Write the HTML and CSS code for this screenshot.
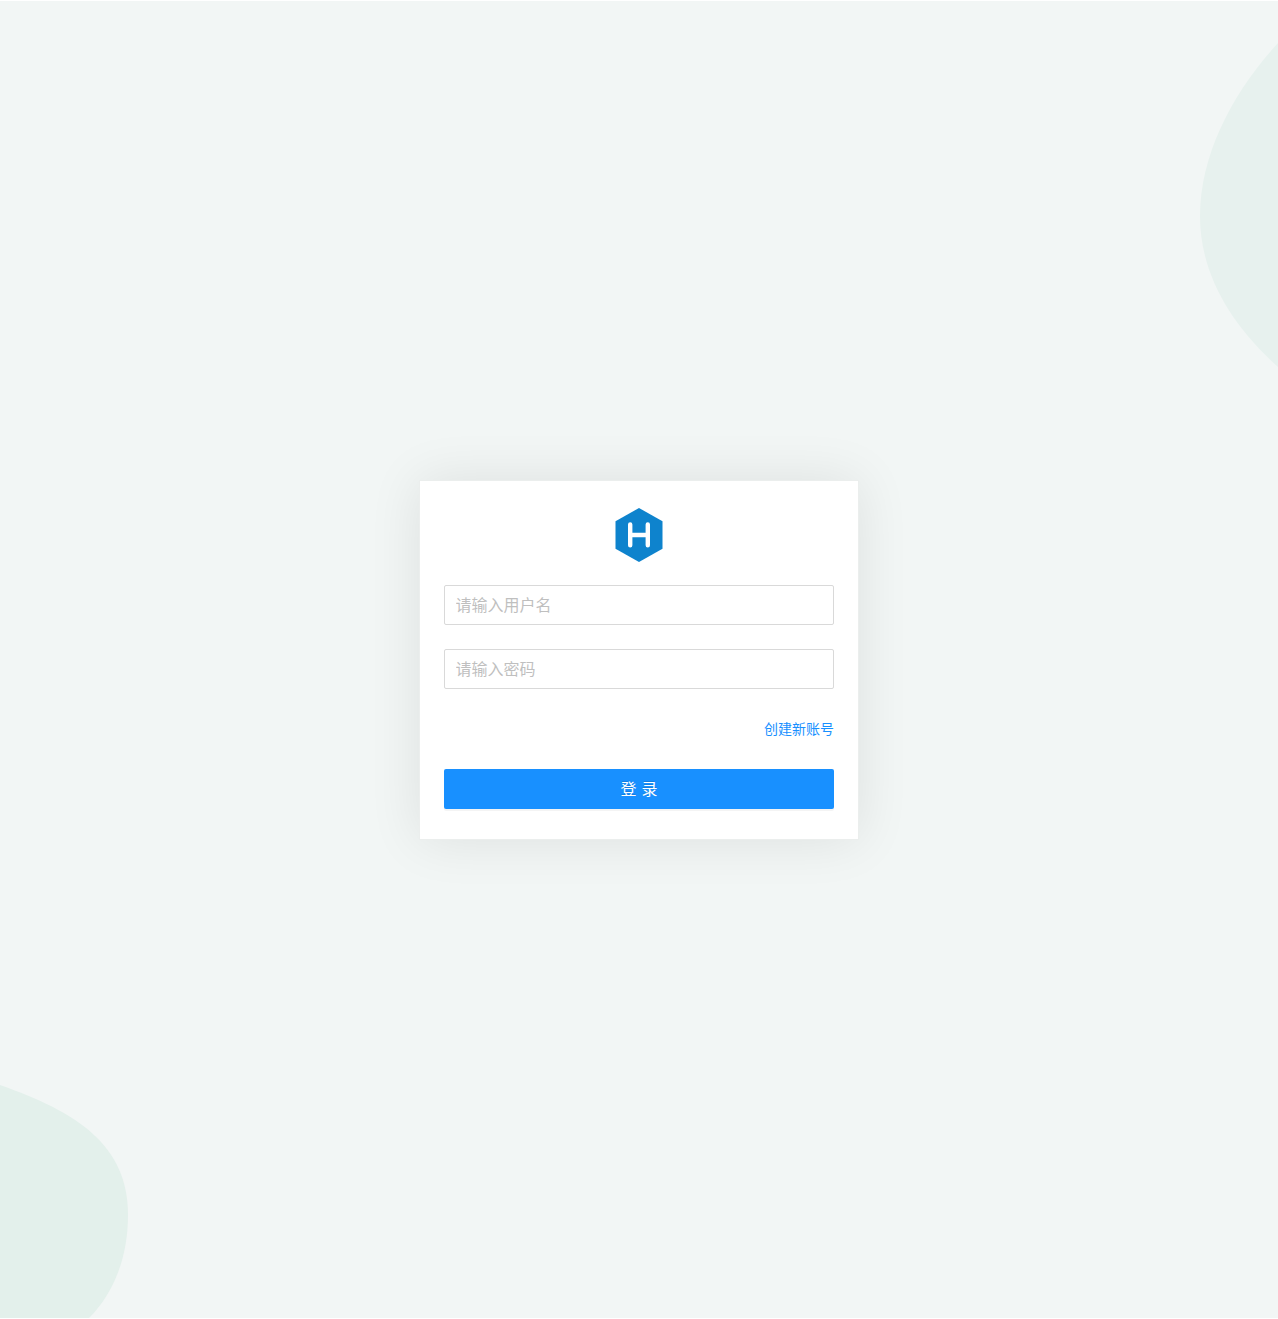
FILE: index.html
```html
<!DOCTYPE html>
<html lang="zh-CN">
<head>
<meta charset="utf-8">
<title>登录</title>
<link rel="stylesheet" href="styles.css">
</head>
<body>
<main class="page">
  <svg class="backdrop" viewBox="0 0 1278 1317" aria-hidden="true">
    <path fill="#e7f1ee" d="M1278 42C1233 91 1200 153 1200 215C1200 271 1229 322 1278 366Z"/>
    <path fill="#e3f0eb" d="M0 1084C77 1111 128 1144 128 1214C128 1256 114 1292 89 1317H0Z"/>
  </svg>
  <form class="card">
    <svg class="logo" viewBox="0 0 48 54" aria-label="Logo">
      <path fill="#0e83cd" d="M24 0L47.5 13.3V40.7L24 54L.5 40.7V13.3Z"/>
      <path fill="none" stroke="#fff" stroke-width="4.4" stroke-linecap="round" d="M15.2 16.5V37.2M32.8 16.5V37.2M15.2 27H32.8"/>
    </svg>
    <input class="field" type="text" placeholder="请输入用户名">
    <input class="field" type="password" placeholder="请输入密码">
    <a class="register" href="#">创建新账号</a>
    <button class="submit" type="button">登 录</button>
  </form>
</main>
</body>
</html>
```
FILE: styles.css
```css
* { box-sizing: border-box; }

body {
  margin: 0;
  background: #fff;
  font-family: "Noto Sans", "Noto Sans CJK SC", sans-serif;
}

.page {
  position: relative;
  display: flex;
  align-items: center;
  justify-content: center;
  height: 1317px;
  margin: 1px 0;
  padding-top: 1px;
  background: #f2f6f5;
  overflow: hidden;
}

.backdrop {
  position: absolute;
  inset: 0;
  width: 1278px;
  height: 1317px;
}

.card {
  position: relative;
  display: flex;
  flex-direction: column;
  width: 440px;
  height: 360px;
  padding: 27px 24px 30px;
  border: 1px solid #ebeeed;
  background: #fff;
  background-clip: padding-box;
  box-shadow: 0 0 50px rgba(0, 0, 0, .09);
}

.logo {
  align-self: center;
  width: 48px;
  height: 54px;
  margin-bottom: 23px;
}

.field {
  width: 100%;
  height: 40px;
  margin: 0 0 24px;
  padding: 5px 11px 7px 10.5px;
  border: 1px solid #d9d9d9;
  border-radius: 2px;
  background: #fff;
  color: rgba(0, 0, 0, .85);
  font: 400 16px/26px "Noto Sans CJK SC", sans-serif;
  outline: none;
}

.field::placeholder {
  color: #bfbfbf;
  opacity: 1;
}

.register {
  align-self: flex-end;
  margin: 4px 0 30px;
  color: #1890ff;
  font: 400 14px/22px "Noto Sans CJK SC", sans-serif;
  text-decoration: none;
}

.submit {
  width: 100%;
  height: 40px;
  padding: 0 0 2px;
  border: 0;
  border-radius: 2px;
  background: #1890ff;
  box-shadow: 0 2px 0 rgba(0, 0, 0, .045);
  color: #fff;
  font: 400 16px/24px "Noto Sans CJK SC", sans-serif;
  word-spacing: 1.5px;
  text-shadow: 0 -1px 0 rgba(0, 0, 0, .12);
}
```
